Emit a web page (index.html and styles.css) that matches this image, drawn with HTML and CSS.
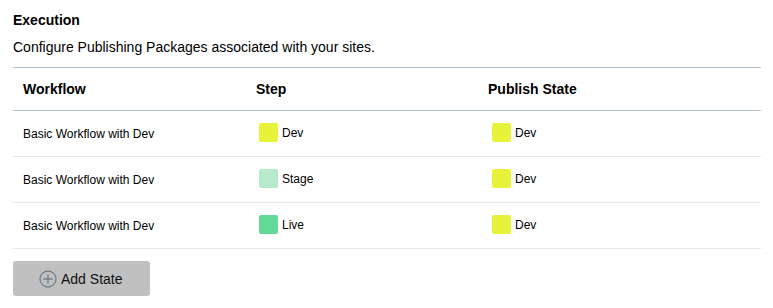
FILE: index.html
```html
<html>
<head>
<meta charset="utf-8"/>
<title>Execution</title>
<link rel="stylesheet" href="styles.css">
</head>
<body>
<div class="panel">
	<h2 class="title">Execution</h2>
	<p class="desc">Configure Publishing Packages associated with your sites.</p>

	<table class="states">
		<thead>
			<tr><th class="c-wf">Workflow</th><th class="c-step">Step</th><th>Publish State</th></tr>
		</thead>
		<tbody>
			<tr>
				<td>Basic Workflow with Dev</td>
				<td><span class="sw dev"></span>Dev</td>
				<td><span class="sw dev pub"></span>Dev</td>
			</tr>
			<tr>
				<td>Basic Workflow with Dev</td>
				<td><span class="sw stage"></span>Stage</td>
				<td><span class="sw dev pub"></span>Dev</td>
			</tr>
			<tr>
				<td>Basic Workflow with Dev</td>
				<td><span class="sw live"></span>Live</td>
				<td><span class="sw dev pub"></span>Dev</td>
			</tr>
		</tbody>
	</table>

	<button class="add" type="button">
		<svg width="18" height="18" viewBox="0 0 18 18">
			<circle cx="9" cy="9" r="8" fill="none" stroke="#6f8189" stroke-width="1.3"/>
			<path d="M9 4.2v9.6M4.2 9h9.6" stroke="#6f8189" stroke-width="1.3"/>
		</svg>
		Add State
	</button>
</div>
</body>
</html>
```

FILE: styles.css
```css
html, body { margin: 0; background: #fff; font-family: "Liberation Sans", Arial, sans-serif; color: #000; }
.panel { padding: 12px 12px 0 13px; }
.title { margin: 0; font-size: 14px; font-weight: bold; line-height: 16px; }
.desc { margin: 11px 0 0; font-size: 14px; line-height: 16px; }

table.states { width: 748px; margin-top: 12px; border-collapse: collapse; }
.states th { text-align: left; font-size: 14px; font-weight: bold; height: 43px; padding: 0 10px;
	border-top: 1px solid #b4c3ce; border-bottom: 1px solid #b4c3ce; }
.states th.c-wf { width: 213px; }
.states th.c-step { width: 212px; }
.states td { font-size: 12px; height: 46px; padding: 0 10px; border-bottom: 1px solid #e9e9e9; vertical-align: middle; }

.sw { display: inline-block; width: 19px; height: 19px; border-radius: 2px; margin: 0 4px 0 3px; vertical-align: middle; position: relative; top: -1px; }
.sw.pub { margin-left: 4px; }
.dev { background: #e8f23b; }
.stage { background: #b7e9cb; }
.live { background: #63d99a; }

button.add { display: flex; align-items: center; gap: 4px; margin-top: 12px; width: 137px; height: 35px;
	padding: 0 0 0 26px; border: none; border-radius: 3px; background: #c0c0c0;
	font-family: "Liberation Sans", Arial, sans-serif; font-size: 14px; color: #111; }
```
